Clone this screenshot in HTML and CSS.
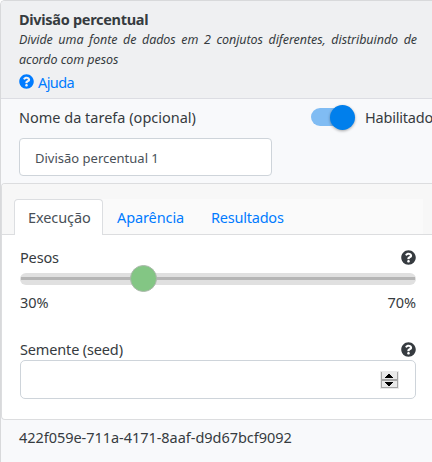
FILE: index.html
```html
<!DOCTYPE html>
<html lang="pt-BR">
<head>
<meta charset="utf-8">
<title>Divisão percentual</title>
<link rel="stylesheet" href="styles.css">
</head>
<body>
<svg class="symbols" aria-hidden="true"><symbol id="help" viewBox="0 0 512 512"><path fill="currentColor" d="M504 256c0 136.997-111.043 248-248 248S8 392.997 8 256C8 119.083 119.043 8 256 8s248 111.083 248 248zM262.655 90c-54.497 0-89.255 22.957-116.549 63.758-3.536 5.286-2.353 12.415 2.715 16.258l34.699 26.31c5.205 3.947 12.621 3.008 16.665-2.122 17.864-22.658 30.113-35.797 57.303-35.797 20.429 0 45.698 13.148 45.698 32.958 0 14.976-12.363 22.667-32.534 33.976C247.128 238.528 216 254.941 216 296v4c0 6.627 5.373 12 12 12h56c6.627 0 12-5.373 12-12v-1.333c0-28.462 83.186-29.647 83.186-106.667 0-58.002-60.165-102-116.531-102zM256 338c-25.365 0-46 20.635-46 46 0 25.364 20.635 46 46 46s46-20.636 46-46c0-25.365-20.635-46-46-46z"/></symbol></svg>
<main class="panel">
  <header class="header">
    <h1 class="title">Divisão percentual</h1>
    <p class="description">Divide uma fonte de dados em 2 conjutos diferentes, distribuindo de acordo com pesos</p>
    <a class="help-link"><svg class="icon"><use href="#help"/></svg><span>Ajuda</span></a>
  </header>
  <section class="task">
    <div class="task-row">
      <label class="task-label">Nome da tarefa (opcional)</label>
      <span class="switch"><span class="knob"></span></span>
      <span class="enabled">Habilitado</span>
    </div>
    <div class="name-input">Divisão percentual 1</div>
  </section>
  <section class="card">
    <div class="card-header">
      <nav class="tabs">
        <a class="tab active">Execução</a>
        <a class="tab tab-middle">Aparência</a>
        <a class="tab">Resultados</a>
      </nav>
    </div>
    <div class="card-body">
      <div class="field-head"><label>Pesos</label><svg class="icon"><use href="#help"/></svg></div>
      <div class="slider"><span class="thumb"></span></div>
      <div class="percent"><span>30%</span><span>70%</span></div>
      <div class="field-head seed"><label>Semente (seed)</label><svg class="icon"><use href="#help"/></svg></div>
      <div class="number">
        <svg class="spinner" viewBox="0 0 19 18" shape-rendering="crispEdges"><path fill="#e9e9e9" d="M0 0h19v18H0z"/><path fill="#a5a5a5" d="M1 1h1v16H1zM17 1h1v16h-1zM1 8h17v2H1zM1 16h17v1H1z"/><path fill="#000" d="M8 3h2v1h1v1h1v1h1v1H5V6h1V5h1V4h1zM5 11h8v1h-1v1h-1v1h-1v1H8v-1H7v-1H6v-1H5z"/></svg>
      </div>
    </div>
  </section>
  <footer class="uuid">422f059e-711a-4171-8aaf-d9d67bcf9092</footer>
</main>
</body>
</html>
```
FILE: styles.css
```css
* { box-sizing: border-box; }
body { margin: 0; overflow: hidden; background: #fff; color: #363b40; font: 14.5px/22px "Noto Sans", "Open Sans", sans-serif; letter-spacing: -.04px; }
.symbols { display: none; }
.panel { width: 440px; height: 470px; background: #f8f9fb; border: solid #d8d9db; border-width: 1px 0 0 1px; border-top-left-radius: 5px; overflow: hidden; }
.header { height: 98px; padding: 8px 22px 0 18px; background: #eff0f2; border-bottom: 1px solid #dcdde3; }
.title { margin: 0; font-size: 14.5px; line-height: 21px; font-weight: 700; letter-spacing: -.3px; white-space: nowrap; }
.description { width: 398px; margin: 0; font-size: 12.5px; line-height: 20px; font-style: italic; letter-spacing: -.06px; text-align: justify; }
.help-link { display: flex; align-items: center; gap: 4px; height: 23px; color: #007bff; letter-spacing: -.6px; }
.icon { width: 15px; height: 15px; flex: none; }
.task { height: 84px; padding: 7px 0 0 18px; }
.task-row { display: flex; align-items: center; height: 22px; white-space: nowrap; }
.task-label { width: 292px; letter-spacing: 0; }
.switch { position: relative; width: 43px; height: 18px; border-radius: 9px; background: #80bcf3; }
.knob { position: absolute; left: 19px; top: -3px; width: 25px; height: 25px; border-radius: 50%; background: #007fec; box-shadow: 0 1px 3px #0005; }
.enabled { margin-left: 11px; letter-spacing: -.2px; }
.name-input { width: 253px; height: 38px; margin-top: 10px; padding: 0 15px; border: 1px solid #ced4da; border-radius: 4px; background: #fff; font-size: 13px; line-height: 38px; color: #495057; letter-spacing: 0; }
.card { height: 237px; border: 1px solid #dcdddf; border-right: 0; border-radius: 4px 0 0 4px; background: #fff; }
.card-header { height: 51px; padding: 15px 17px 0 12px; background: #f7f7f7; border-bottom: 1px solid #dcdddf; border-top-left-radius: 3px; }
.tabs { display: flex; height: 36px; background: linear-gradient(#fafafa, #fafafa) 0 0 / 100% 35px no-repeat; }
.tab { height: 36px; padding: 0 14px; color: #007bff; line-height: 37px; white-space: nowrap; letter-spacing: -.22px; }
.active { width: 89px; padding-left: 13px; border: 1px solid #dcdee1; border-bottom: 0; border-radius: 4px 4px 0 0; background: #fff; color: #495057; line-height: 35px; letter-spacing: -.1px; }
.tab-middle { width: 94px; letter-spacing: -.1px; }
.card-body { width: 414px; padding: 11px 0 0 18px; }
.field-head { display: flex; justify-content: space-between; align-items: center; height: 22px; letter-spacing: -.15px; }
.field-head label { margin-top: -1px; }
.slider { position: relative; width: 396px; height: 12px; margin-top: 5px; padding: 4px 1px; border-radius: 6px; background: #e0e0e0; }
.slider::before { content: ""; display: block; height: 3px; background: #b5b5b5; }
.thumb { position: absolute; left: 110px; top: -8px; width: 27px; height: 27px; border: 1px solid #abb8ab; border-radius: 50%; background: #83c684; }
.percent { display: flex; justify-content: space-between; margin-top: 6px; }
.seed { margin-top: 25px; }
.number { display: flex; align-items: center; justify-content: flex-end; width: 396px; height: 39px; padding-right: 16px; border: 1px solid #ced4da; border-radius: 5px; }
.spinner { width: 19px; height: 18px; }
.uuid { padding: 6px 0 0 18px; }
```
